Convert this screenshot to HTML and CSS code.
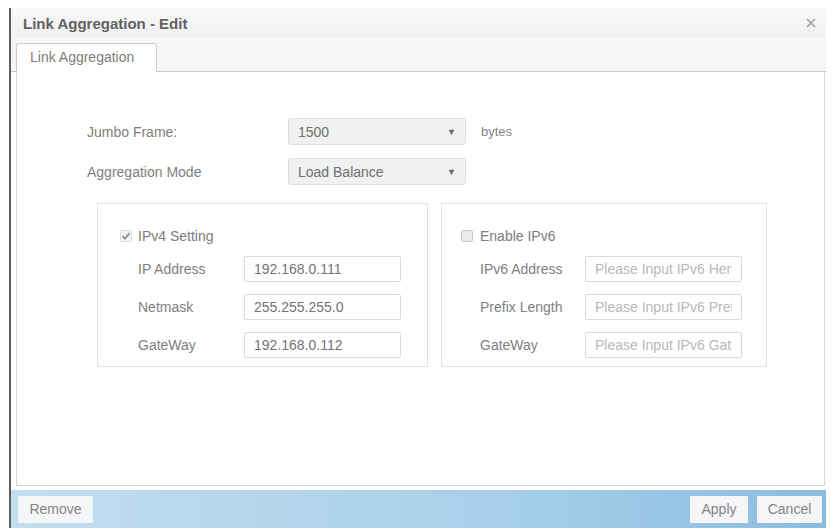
FILE: index.html
```html
<!DOCTYPE html>
<html>
<head>
  <link rel="stylesheet" href="styles.css">
</head>
<body>
  <div class="dialog">
    <div class="titlebar">
      <span class="title">Link Aggregation - Edit</span>
      <span class="close">
        <svg width="10" height="10" viewBox="0 0 10 10"><path d="M1 1 L9 9 M9 1 L1 9" stroke="#9f9f9f" stroke-width="1.6"/></svg>
      </span>
    </div>

    <div class="tabbar">
      <div class="tab">Link Aggregation</div>
    </div>

    <div class="content">
      <div class="form-grid">
        <span class="label">Jumbo Frame:</span>
        <div class="select"><span>1500</span><span class="arrow">&#9660;</span></div>
        <span class="unit">bytes</span>

        <span class="label">Aggregation Mode</span>
        <div class="select"><span>Load Balance</span><span class="arrow">&#9660;</span></div>
        <span></span>
      </div>

      <div class="boxes">
        <div class="box box-v4">
          <label class="box-head">
            <span class="check checked">
              <svg width="10" height="10" viewBox="0 0 10 10"><path d="M1.5 5.2 L4 7.6 L8.6 2.2" fill="none" stroke="#939393" stroke-width="1.8"/></svg>
            </span>
            IPv4 Setting
          </label>
          <div class="fields">
            <span class="label">IP Address</span>
            <input class="field" type="text" value="192.168.0.111">
            <span class="label">Netmask</span>
            <input class="field" type="text" value="255.255.255.0">
            <span class="label">GateWay</span>
            <input class="field" type="text" value="192.168.0.112">
          </div>
        </div>

        <div class="box box-v6">
          <label class="box-head">
            <span class="check"></span>
            Enable IPv6
          </label>
          <div class="fields">
            <span class="label">IPv6 Address</span>
            <input class="field" type="text" placeholder="Please Input IPv6 Here">
            <span class="label">Prefix Length</span>
            <input class="field" type="text" placeholder="Please Input IPv6 Prefix">
            <span class="label">GateWay</span>
            <input class="field" type="text" placeholder="Please Input IPv6 GateWay">
          </div>
        </div>
      </div>
    </div>

    <div class="footer">
      <button class="btn">Remove</button>
      <div class="footer-right">
        <button class="btn">Apply</button>
        <button class="btn">Cancel</button>
      </div>
    </div>
  </div>
</body>
</html>
```

FILE: styles.css
```css
body {
  margin: 0;
  background: #ffffff;
  font-family: "Liberation Sans", Arial, sans-serif;
  font-size: 14px;
  color: #777;
}

.dialog {
  margin: 8px 0 0 9px;
  width: 817px;
  height: 520px;
  box-sizing: border-box;
  border-left: 2px solid #5e5e5e;
  display: flex;
  flex-direction: column;
}

.titlebar {
  height: 30px;
  flex: none;
  display: flex;
  align-items: center;
  justify-content: space-between;
  padding: 0 10px 0 12px;
  background: linear-gradient(#f8f8f8, #f0f0f0);
}

.title {
  font-size: 15px;
  font-weight: bold;
  color: #626262;
}

.close {
  display: flex;
}

.tabbar {
  height: 34px;
  flex: none;
  box-sizing: border-box;
  display: flex;
  align-items: flex-end;
  padding-left: 5px;
  background: #f6f6f6;
  border-bottom: 1px solid #c8c8c8;
}

.tab {
  width: 141px;
  height: 29px;
  box-sizing: border-box;
  margin-bottom: -1px;
  padding: 5px 0 0 13px;
  background: #fff;
  border: 1px solid #cfcfcf;
  border-bottom: none;
  border-radius: 3px 3px 0 0;
  color: #7c7c7c;
}

.content {
  flex: 1;
  margin: 0 1px 4px 5px;
  padding-top: 46px;
  border: 1px solid #d6d6d6;
  border-top: none;
}

/* top form rows */
.form-grid {
  display: grid;
  grid-template-columns: 201px 178px auto;
  grid-auto-rows: 27px;
  row-gap: 13px;
  align-items: center;
  padding-left: 70px;
}

.label {
  color: #808080;
}

.select {
  height: 27px;
  box-sizing: border-box;
  display: flex;
  align-items: center;
  justify-content: space-between;
  padding: 0 9px;
  background: #f1f1f1;
  border: 1px solid #e0e0e0;
  border-radius: 3px;
  color: #707070;
}

.arrow {
  font-size: 9px;
  color: #6a6a6a;
}

.unit {
  padding-left: 15px;
  font-size: 13px;
  color: #858585;
}

/* ipv4 / ipv6 boxes */
.boxes {
  display: flex;
  gap: 13px;
  margin: 18px 0 0 80px;
}

.box {
  height: 164px;
  box-sizing: border-box;
  border: 1px solid #e2e2e2;
  padding-top: 20px;
}

.box-v4 {
  width: 331px;
}

.box-v6 {
  width: 326px;
}

.box-head {
  height: 24px;
  display: flex;
  align-items: center;
  gap: 6px;
  padding-left: 22px;
  color: #7c7c7c;
}

.box-v6 .box-head {
  padding-left: 19px;
  gap: 7px;
}

.check {
  width: 12px;
  height: 12px;
  box-sizing: border-box;
  display: inline-flex;
  align-items: center;
  justify-content: center;
  border: 1px solid #c8c8c8;
  border-radius: 2px;
  background: #ececec;
}

.check.checked {
  border-color: #dcdcdc;
  background: #f4f4f4;
}

.fields {
  display: grid;
  grid-template-columns: 106px 157px;
  grid-auto-rows: 26px;
  row-gap: 12px;
  align-items: center;
  margin-top: 8px;
  padding-left: 40px;
}

.box-v6 .fields {
  grid-template-columns: 105px 157px;
  padding-left: 38px;
}

.field {
  height: 26px;
  width: 157px;
  box-sizing: border-box;
  margin: 0;
  padding: 0 9px;
  border: 1px solid #dadada;
  border-radius: 2px;
  font-family: inherit;
  font-size: 14px;
  color: #737373;
  outline: none;
}

.field::placeholder {
  color: #b8b8b8;
}

/* bottom bar */
.footer {
  height: 38px;
  flex: none;
  box-sizing: border-box;
  display: flex;
  align-items: center;
  justify-content: space-between;
  padding: 0 4px 0 7px;
  background: linear-gradient(to right, #c2def0, #a7cfea 60%, #8bbcdf);
}

.footer-right {
  display: flex;
  gap: 9px;
}

.btn {
  height: 27px;
  padding: 0 10px;
  border: none;
  border-radius: 1px;
  background: #f5f6f7;
  font-family: inherit;
  font-size: 14px;
  color: #858585;
}

.footer > .btn {
  width: 75px;
}

.footer-right .btn:first-child {
  width: 58px;
}

.footer-right .btn:last-child {
  width: 65px;
}
```
